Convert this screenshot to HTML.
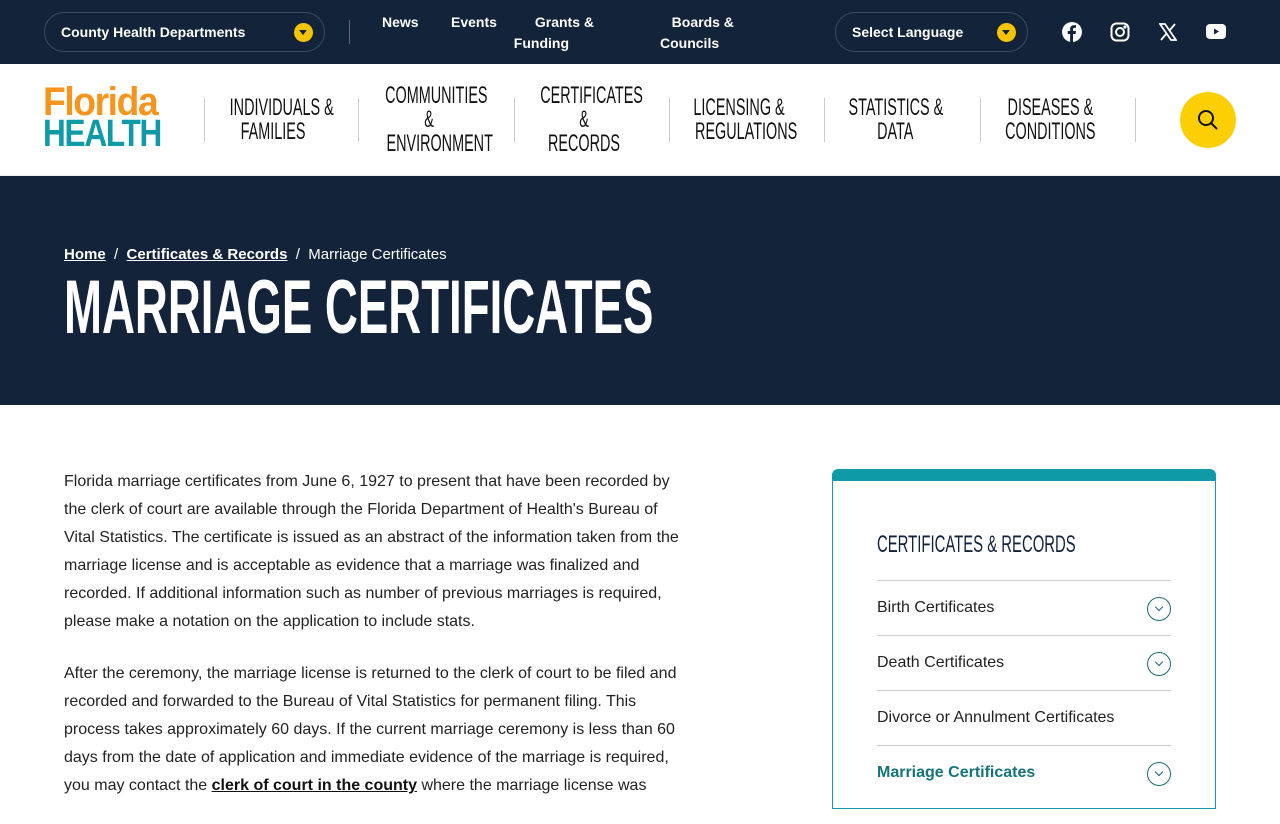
<!DOCTYPE html>
<html><head><meta charset="utf-8">
<style>
*{margin:0;padding:0;box-sizing:border-box}
body{width:1280px;height:800px;overflow:hidden;background:#fff;font-family:"Liberation Sans",sans-serif;color:#1a1a1a}
.top{height:64px;background:#13233a;position:relative;color:#fff}
.pill{position:absolute;top:12px;height:40px;border:1px solid #3a4a60;border-radius:20px;font-weight:bold;font-size:14px;line-height:38px;padding-left:16px}
.dd{position:absolute;right:11px;top:10px;width:19px;height:19px;border-radius:50%;background:#f5c400}
.dd:after{content:"";position:absolute;left:5px;top:7px;border-left:4.5px solid transparent;border-right:4.5px solid transparent;border-top:5px solid #13233a}
.tl{position:absolute;font-weight:bold;font-size:14px;line-height:21px;top:12px}
.nav{height:112px;position:relative;border-bottom:1px solid #eee}
.ni{position:absolute;top:98px;height:44px;border-left:1px solid #ccc}
.nt{position:absolute;width:156px;text-align:center;font-size:24px;line-height:24px;color:#111}
.nt span{display:inline-block;transform:scaleX(.6);white-space:nowrap}
.hero{height:229px;background:#13233a;position:relative;color:#fff}
.bc{position:absolute;left:64px;top:70px;font-size:15px}
.bc a{color:#fff;font-weight:bold;text-decoration:underline}
h1{position:absolute;left:64px;top:92px;font-size:76px;line-height:80px;white-space:nowrap;transform:scaleX(.6);transform-origin:left}
.body{position:absolute;left:64px;top:468px;width:626px;font-size:16px;line-height:28px;color:#222}
.body p{margin-bottom:24px}
.body a{color:#111;font-weight:bold;text-decoration:underline}
.side{position:absolute;left:832px;top:469px;width:384px;height:340px;border:1.5px solid #0e9aa7;border-top:12px solid #0e9aa7;border-radius:6px 6px 0 0}
.side h3{position:absolute;left:44px;top:50px;font-size:24px;font-weight:normal;transform:scaleX(.62);transform-origin:left;white-space:nowrap;color:#13233a}
.it{position:absolute;left:44px;width:294px;height:55px;border-top:1px solid #ccc;font-size:16px;line-height:54px;color:#222}
.it i{position:absolute;right:0;top:16px;width:24px;height:24px;border:1.3px solid #1b6a72;border-radius:50%}
.it i:after{content:"";position:absolute;left:8px;top:6px;width:5px;height:5px;border-right:1.3px solid #1b6a72;border-bottom:1.3px solid #1b6a72;transform:rotate(45deg)}
</style></head><body>
<div class="top">
 <div class="pill" style="left:44px;width:281px">County Health Departments<span class="dd"></span></div>
 <div style="position:absolute;left:349px;top:20px;height:24px;border-left:1px solid #667"></div>
 <div class="tl" style="left:382px">News</div>
 <div class="tl" style="left:451px">Events</div>
 <div class="tl" style="left:514px;width:80px;text-align:right">Grants &amp;<br><span style="position:relative;left:-25px">Funding</span></div>
 <div class="tl" style="left:660px;width:80px">&nbsp;&nbsp;&nbsp;Boards &amp;<br>Councils</div>
 <div class="pill" style="left:835px;width:193px">Select Language<span class="dd"></span></div>
 <svg style="position:absolute;left:1062px;top:22px" width="20" height="20" viewBox="0 0 20 20"><circle cx="10" cy="10" r="10" fill="#fff"/><path d="M11 20V12h2.6l.4-3H11V7.3c0-.9.3-1.4 1.5-1.4H14V3.3c-.3 0-1.200-.1-2.2-.1-2.2 0-3.7 1.3-3.7 3.8V9H5.7v3h2.4v8z" fill="#13233a"/></svg>
 <svg style="position:absolute;left:1110px;top:22px" width="20" height="20" viewBox="0 0 20 20" fill="none" stroke="#fff" stroke-width="2"><rect x="1.5" y="1.5" width="17" height="17" rx="5"/><circle cx="10" cy="10" r="4"/><circle cx="15" cy="5" r=".6" fill="#fff"/></svg>
 <svg style="position:absolute;left:1159px;top:23px" width="18" height="18" viewBox="0 0 18 18"><path d="M1 1h5l11 16h-5z" fill="none" stroke="#fff" stroke-width="1.8"/><path d="M16 1L10 8M2 17l6-7" stroke="#fff" stroke-width="1.8"/></svg>
 <svg style="position:absolute;left:1206px;top:24px" width="20" height="15" viewBox="0 0 20 15"><rect width="20" height="15" rx="4" fill="#fff"/><path d="M8 4.5v6l5-3z" fill="#13233a"/></svg>
</div>
<div class="nav">
 <div style="position:absolute;left:43px;top:22px;line-height:32px;font-weight:bold;letter-spacing:-1.5px">
  <div style="font-size:40px;color:#f7941d;transform:scaleX(.93);transform-origin:left">Florida</div>
  <div style="font-size:38px;color:#0e9aa7;transform:scaleX(.83);transform-origin:left">HEALTH</div>
 </div>
 <div class="ni" style="left:204px;top:34px"></div>
 <div class="ni" style="left:358px;top:34px"></div>
 <div class="ni" style="left:514px;top:34px"></div>
 <div class="ni" style="left:669px;top:34px"></div>
 <div class="ni" style="left:824px;top:34px"></div>
 <div class="ni" style="left:980px;top:34px"></div>
 <div class="ni" style="left:1135px;top:34px"></div>
 <div class="nt" style="left:195px;top:32px"><span>INDIVIDUALS &amp;</span><br><span>FAMILIES</span></div>
 <div class="nt" style="left:351px;top:20px"><span>COMMUNITIES</span><br><span>&amp;</span><br><span>ENVIRONMENT</span></div>
 <div class="nt" style="left:506px;top:20px"><span>CERTIFICATES</span><br><span>&amp;</span><br><span>RECORDS</span></div>
 <div class="nt" style="left:661px;top:32px"><span>LICENSING &amp;</span><br><span>REGULATIONS</span></div>
 <div class="nt" style="left:817px;top:32px"><span>STATISTICS &amp;</span><br><span>DATA</span></div>
 <div class="nt" style="left:972px;top:32px"><span>DISEASES &amp;</span><br><span>CONDITIONS</span></div>
 <div style="position:absolute;left:1180px;top:28px;width:56px;height:56px;border-radius:50%;background:#fccf05">
  <svg style="position:absolute;left:17px;top:17px" width="22" height="22" viewBox="0 0 22 22" fill="none" stroke="#111" stroke-width="2"><circle cx="9" cy="9" r="7"/><path d="M14 14l6 6"/></svg>
 </div>
</div>
<div class="hero">
 <div class="bc"><a>Home</a>&nbsp;&nbsp;/&nbsp;&nbsp;<a>Certificates &amp; Records</a>&nbsp;&nbsp;/&nbsp;&nbsp;Marriage Certificates</div>
 <h1>MARRIAGE CERTIFICATES</h1>
</div>
<div class="body">
<p>Florida marriage certificates from June 6, 1927 to present that have been recorded by the clerk of court are available through the Florida Department of Health's Bureau of Vital Statistics. The certificate is issued as an abstract of the information taken from the marriage license and is acceptable as evidence that a marriage was finalized and recorded. If additional information such as number of previous marriages is required, please make a notation on the application to include stats.</p>
<p>After the ceremony, the marriage license is returned to the clerk of court to be filed and recorded and forwarded to the Bureau of Vital Statistics for permanent filing. This process takes approximately 60 days. If the current marriage ceremony is less than 60 days from the date of application and immediate evidence of the marriage is required, you may contact the <a>clerk of court in the county</a> where the marriage license was</p>
</div>
<div class="side">
 <h3>CERTIFICATES &amp; RECORDS</h3>
 <div class="it" style="top:99px">Birth Certificates<i></i></div>
 <div class="it" style="top:154px">Death Certificates<i></i></div>
 <div class="it" style="top:209px">Divorce or Annulment Certificates</div>
 <div class="it" style="top:264px;color:#16737b;font-weight:bold">Marriage Certificates<i></i></div>
</div>
</body></html>
